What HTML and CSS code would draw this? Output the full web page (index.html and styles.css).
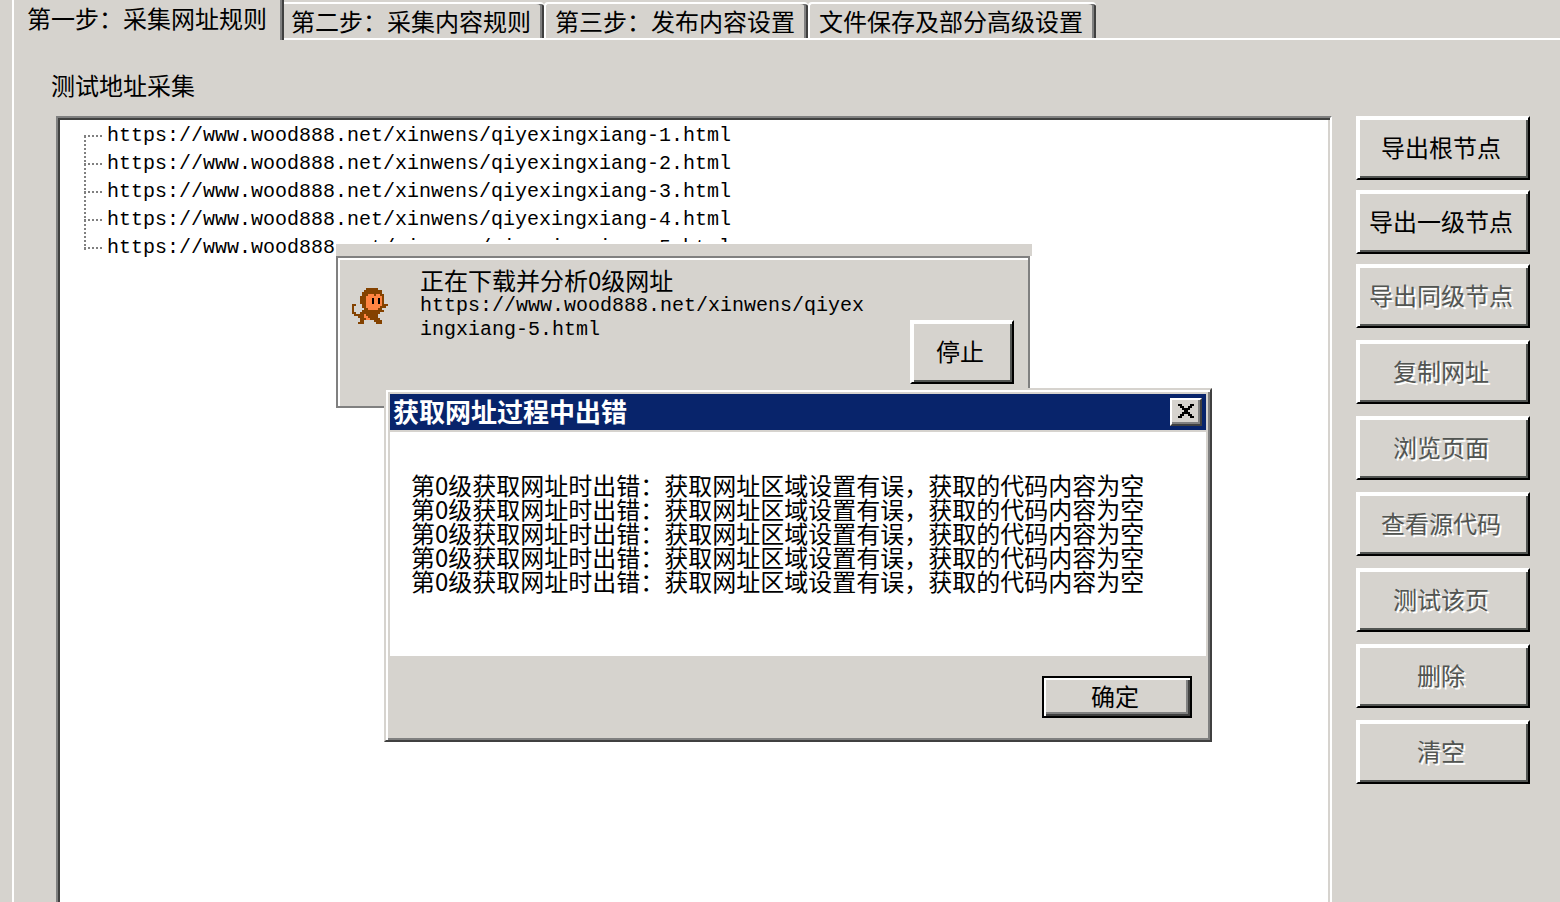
FILE: index.html
```
<!DOCTYPE html>
<html lang="zh-CN">
<head>
    <meta charset="UTF-8">
    <title>采集网址规则</title>
    <link rel="stylesheet" href="styles.css">
</head>
<body>
    <nav class="tabs">
        <button class="tab active">第一步：采集网址规则</button>
        <button class="tab">第二步：采集内容规则</button>
        <button class="tab">第三步：发布内容设置</button>
        <button class="tab">文件保存及部分高级设置</button>
    </nav>

    <main class="panel">
        <h2>测试地址采集</h2>
        <div class="content">
            <div class="tree-box">
                <ul class="tree">
                    <li>https://www.wood888.net/xinwens/qiyexingxiang-1.html</li>
                    <li>https://www.wood888.net/xinwens/qiyexingxiang-2.html</li>
                    <li>https://www.wood888.net/xinwens/qiyexingxiang-3.html</li>
                    <li>https://www.wood888.net/xinwens/qiyexingxiang-4.html</li>
                    <li>https://www.wood888.net/xinwens/qiyexingxiang-5.html</li>
                </ul>
            </div>
            <div class="actions">
                <div class="export-actions">
                    <button class="btn">导出根节点</button>
                    <button class="btn">导出一级节点</button>
                    <button class="btn" disabled>导出同级节点</button>
                </div>
                <button class="btn" disabled>复制网址</button>
                <button class="btn" disabled>浏览页面</button>
                <button class="btn" disabled>查看源代码</button>
                <button class="btn" disabled>测试该页</button>
                <button class="btn" disabled>删除</button>
                <button class="btn" disabled>清空</button>
            </div>
        </div>
    </main>

    <section class="progress">
        <div class="progress-body">
            <svg class="monkey" viewBox="0 0 18 18" width="36" height="36" shape-rendering="crispEdges">
                <path fill="#844200" d="M7 0h6v1h-6zM6 1h9v1h-9zM5 2h10v1h-10zM5 3h11v1h-11zM4 4h12v4h-12zM0 8h2v1h-2zM5 8h13v1h-13zM0 9h1v3h-1zM5 9h12v1h-12zM6 10h9v1h-9zM5 11h11v1h-11zM0 12h2v1h-2zM4 12h10v1h-10zM1 13h12v1h-12zM3 14h10v1h-10zM4 15h10v1h-10zM4 16h2v1h-2zM11 16h4v1h-4zM3 17h3v1h-3zM12 17h3v1h-3z"/>
                <path fill="#ff8442" d="M8 3h3v1h-3zM12 3h2v1h-2zM7 4h8v5h-8zM7 9h7v1h-7zM8 10h5v1h-5zM6 13h1v1h-1zM6 14h2v1h-2zM7 15h2v1h-2z"/>
                <path fill="#000" d="M10 5h1v3h-1zM13 5h1v3h-1z"/>
            </svg>
            <p>正在下载并分析0级网址
                <span class="url">https://www.wood888.net/xinwens/qiyex<br>ingxiang-5.html</span>
            </p>
            <button class="btn stop">停止</button>
        </div>
    </section>

    <section class="dialog" role="dialog" aria-labelledby="dialog-title">
        <header class="title-bar">
            <h1 id="dialog-title">获取网址过程中出错</h1>
            <button class="close" aria-label="关闭">
                <svg viewBox="0 0 8 7" width="16" height="14" shape-rendering="crispEdges">
                    <path d="M0 0h2v1h1v1h2v-1h1v-1h2v1h-1v1h-1v1h-1v1h1v1h1v1h1v1h-2v-1h-1v-1h-2v1h-1v1h-2v-1h1v-1h1v-1h1v-1h-1v-1h-1v-1h-1z"/>
                </svg>
            </button>
        </header>
        <div class="messages">
            <p>第0级获取网址时出错：获取网址区域设置有误，获取的代码内容为空</p>
            <p>第0级获取网址时出错：获取网址区域设置有误，获取的代码内容为空</p>
            <p>第0级获取网址时出错：获取网址区域设置有误，获取的代码内容为空</p>
            <p>第0级获取网址时出错：获取网址区域设置有误，获取的代码内容为空</p>
            <p>第0级获取网址时出错：获取网址区域设置有误，获取的代码内容为空</p>
        </div>
        <footer>
            <button class="ok">确定</button>
        </footer>
    </section>
</body>
</html>
```
FILE: styles.css
```
* {
    box-sizing: border-box;
}
body {
    display: flex;
    flex-direction: column;
    height: 100vh;
    margin: 0;
    padding-left: 12px;
    overflow: hidden;
    background-color: #d6d3ce;
    color: #000;
    font-family: "Noto Sans CJK SC", sans-serif;
    font-size: 24px;
    line-height: 24px;
}
h1, h2, p, ul {
    margin: 0;
    padding: 0;
    font-weight: normal;
}
button {
    padding: 0 4px 2px 0;
    background-color: #d6d3ce;
    color: #000;
    font: inherit;
    white-space: nowrap;
}

/* tabs */
.tabs {
    display: flex;
    align-items: flex-end;
    height: 40px;
    margin-bottom: -2px;
}
.tab {
    height: 38px;
    padding: 0 13px 0 9px;
    border: 2px solid #fff;
    border-right: 0;
    border-radius: 4px 4px 0 0;
    box-shadow: inset -2px 0 #404040, inset -4px 0 #808080;
}
.tab.active {
    position: relative;
    height: 40px;
    margin-right: -4px;
    padding: 0 17px 4px 13px;
    border-top: 0;
    border-bottom: 0;
    border-radius: 0;
}

/* panel */
.panel {
    display: flex;
    flex: 1;
    flex-direction: column;
    min-height: 0;
    padding: 33px 30px 0 42px;
    border-top: 2px solid #fff;
    border-left: 2px solid #fff;
}
h2 {
    height: 43px;
    margin-left: -5px;
    font-size: 24px;
}
.content {
    display: flex;
    flex: 1;
    gap: 24px;
    min-height: 0;
}
.tree-box {
    flex: 1;
    min-width: 0;
    padding: 4px 2px;
    border: 2px solid #808080;
    border-right-color: #fff;
    border-bottom: 0;
    background-color: #fff;
    box-shadow: inset 2px 2px #404040, inset -2px 0 #d6d3ce;
}
.tree {
    padding-left: 24px;
    background: repeating-linear-gradient(#808080 0 2px, transparent 2px 4px) 24px 14px / 2px 114px no-repeat;
    list-style: none;
}
.tree li {
    display: flex;
    align-items: center;
    gap: 5px;
    height: 28px;
    white-space: nowrap;
}
.tree li::before {
    content: "";
    width: 18px;
    height: 2px;
    background: repeating-linear-gradient(90deg, #808080 0 2px, transparent 2px 4px);
}
.tree, .url {
    font-family: "Liberation Mono", monospace;
    font-size: 20px;
}
.url {
    display: block;
    padding-top: 2px;
}

/* buttons on the right */
.actions {
    display: flex;
    flex-direction: column;
    gap: 12px;
    width: 174px;
}
.export-actions {
    display: grid;
    gap: 10px;
}
.btn {
    height: 64px;
    border: 2px solid;
    border-color: #fff #000 #000 #fff;
    box-shadow: inset 2px 2px #fff, inset -2px -2px #525552;
}
.btn:disabled {
    color: #525552;
    text-shadow: 2px 2px #fff;
}

/* download progress window */
.progress {
    position: absolute;
    top: 242px;
    left: 336px;
    width: 696px;
    padding-right: 2px;
    border-top: 2px solid #fff;
    background: linear-gradient(#d6d3ce 12px, #fff 12px);
}
.progress-body {
    display: flex;
    align-items: flex-start;
    height: 152px;
    margin-top: 12px;
    padding: 10px 14px 0;
    border: 2px solid #808080;
    background-color: #d6d3ce;
    box-shadow: inset 2px 2px #fff;
}
.monkey {
    margin: 20px 32px 0 0;
}
.progress p {
    flex: 1;
}
.stop {
    width: 104px;
    margin-top: 52px;
}

/* error dialog */
.dialog {
    position: absolute;
    top: 388px;
    left: 384px;
    width: 828px;
    padding: 4px;
    border: 2px solid;
    border-color: #d6d3ce #404040 #404040 #d6d3ce;
    background-color: #d6d3ce;
    box-shadow: inset 2px 2px #fff, inset -2px -2px #808080;
}
.title-bar {
    display: flex;
    align-items: center;
    justify-content: space-between;
    height: 36px;
    padding: 0 4px 0 3px;
    background-color: #08246b;
}
h1 {
    padding-bottom: 2px;
    color: #fff;
    font-size: 26px;
    font-weight: bold;
}
.close {
    display: grid;
    place-items: center;
    width: 32px;
    height: 28px;
    padding: 0 0 2px;
    border: 2px solid;
    border-color: #fff #404040 #404040 #fff;
    box-shadow: inset -2px -2px #808080;
}
.messages {
    height: 224px;
    margin-top: 2px;
    padding: 41px 21px;
    background-color: #fff;
    white-space: nowrap;
}
footer {
    display: flex;
    justify-content: flex-end;
    padding: 20px 14px 18px;
}
.ok {
    width: 150px;
    height: 42px;
    border: 2px solid #000;
    box-shadow: inset 2px 2px #fff, inset -2px -2px #404040, inset -4px -4px #808080;
}
```
